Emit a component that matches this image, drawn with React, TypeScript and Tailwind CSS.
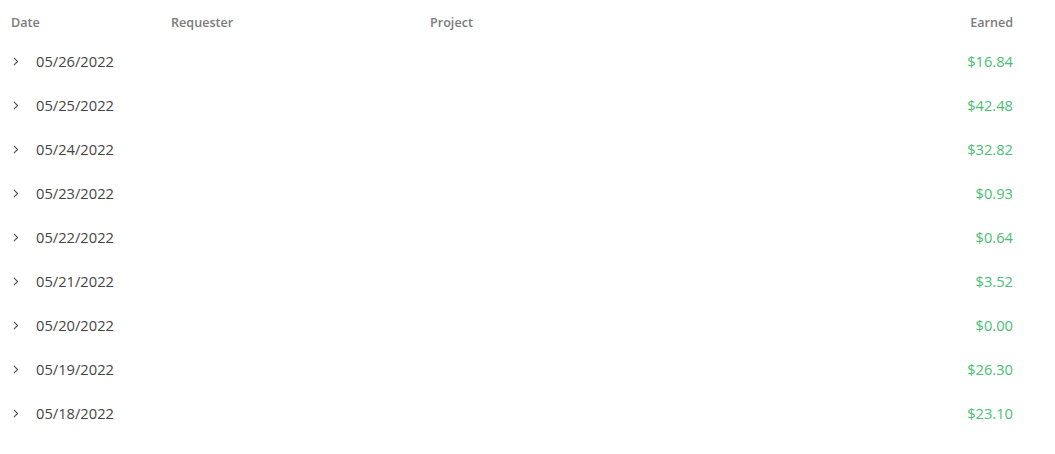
const ROWS = [
  { date: "05/26/2022", earned: "$16.84" },
  { date: "05/25/2022", earned: "$42.48" },
  { date: "05/24/2022", earned: "$32.82" },
  { date: "05/23/2022", earned: "$0.93" },
  { date: "05/22/2022", earned: "$0.64" },
  { date: "05/21/2022", earned: "$3.52" },
  { date: "05/20/2022", earned: "$0.00" },
  { date: "05/19/2022", earned: "$26.30" },
  { date: "05/18/2022", earned: "$23.10" },
];

function Chevron() {
  return (
    <svg width="6" height="9" viewBox="0 0 6 9" fill="none" className="mt-[2px] text-[#555]">
      <polyline points="1.2,1.2 4.5,4.5 1.2,7.8" stroke="currentColor" strokeWidth="1.1" strokeLinecap="round" strokeLinejoin="round" />
    </svg>
  );
}

export default function App() {
  return (
    <div className="min-h-[454px] bg-white pl-[11px] pr-[42px] font-['Open_Sans',sans-serif]">
      <div className="flex h-[39px] items-start pt-[15px] text-[12.6px] font-semibold leading-4 text-[#7b7b7b]">
        <div className="w-[160px]">Date</div>
        <div className="w-[259px]">Requester</div>
        <div className="flex-1">Project</div>
        <div className="text-right">Earned</div>
      </div>
      {ROWS.map((row) => (
        <div key={row.date} className="flex h-11 items-center text-[14.7px] text-[#444]">
          <div className="flex w-[160px] items-center">
            <span className="ml-[2px] flex w-[23px] items-center">
              <Chevron />
            </span>
            <span>{row.date}</span>
          </div>
          <div className="w-[259px]" />
          <div className="flex-1" />
          <div className="text-right text-[#48c072]">{row.earned}</div>
        </div>
      ))}
    </div>
  );
}
